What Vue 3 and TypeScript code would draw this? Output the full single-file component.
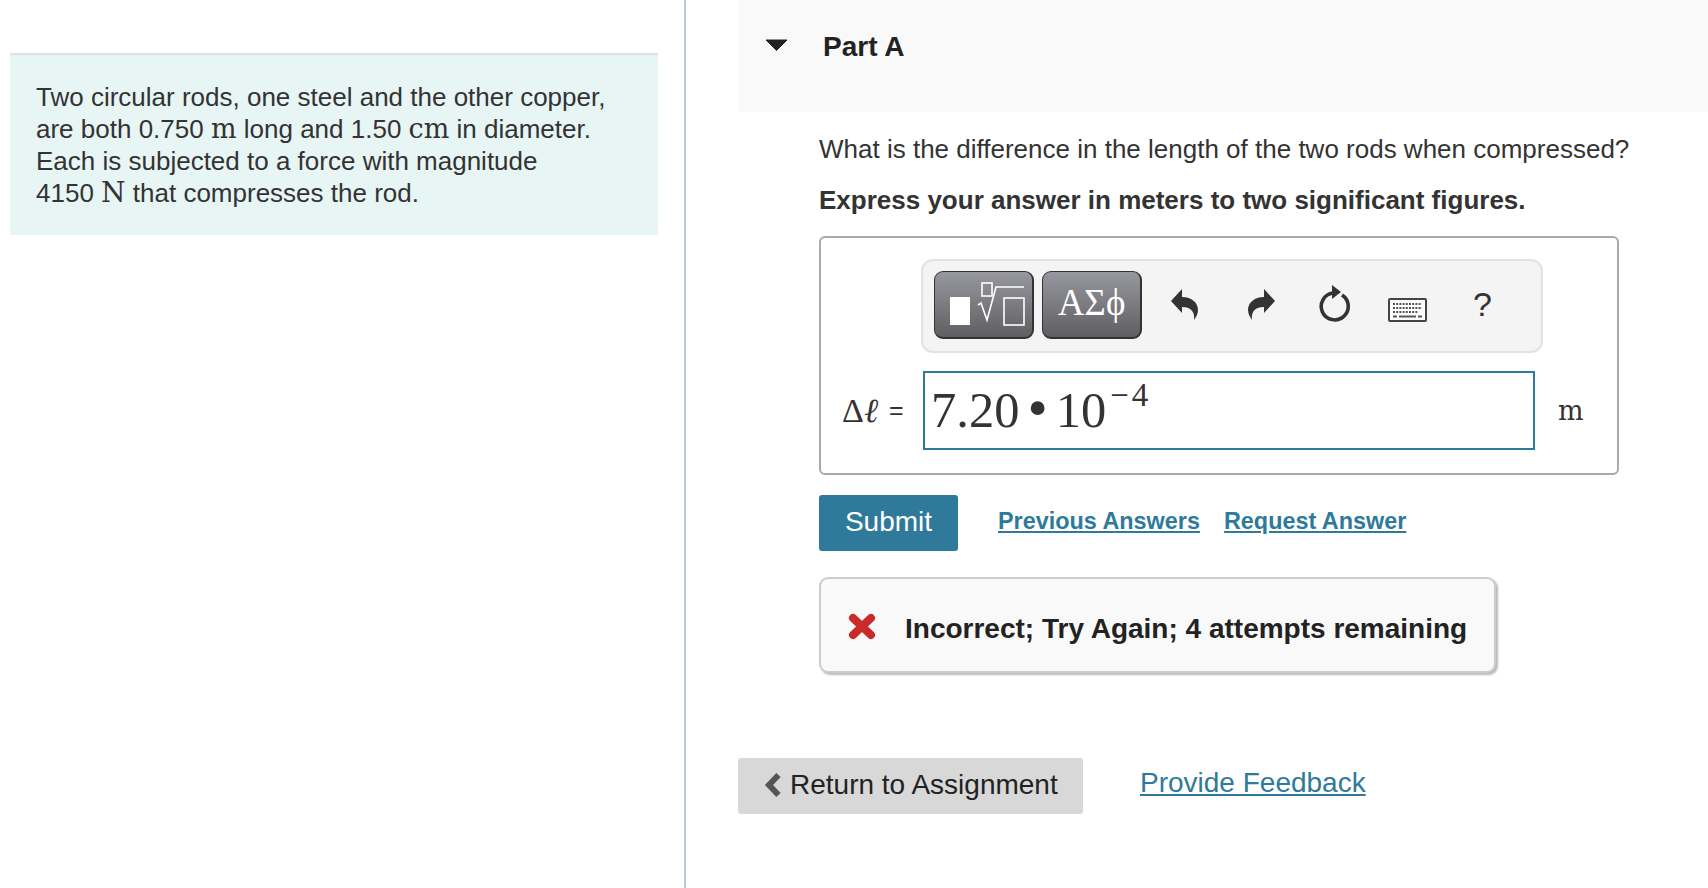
<template>
  <div class="page">
    <!-- left column -->
    <div class="left">
      <div class="intro">
        Two circular rods, one steel and the other copper,<br>
        are both 0.750 <span class="unit">m</span> long and 1.50 <span class="unit">cm</span> in diameter.<br>
        Each is subjected to a force with magnitude<br>
        4150 <span class="unit big">N</span> that compresses the rod.
      </div>
    </div>

    <!-- right column -->
    <div class="right">
      <div class="part-head">
        <svg class="caret" width="23" height="12" viewBox="0 0 23 12"><path d="M1 1H22L11.5 11.5Z" fill="#222" stroke="#222" stroke-linejoin="round" /></svg>
        <h2>Part A</h2>
      </div>

      <div class="part-body">
        <p class="question">What is the difference in the length of the two rods when compressed?</p>
        <p class="instruction">Express your answer in meters to two significant figures.</p>

        <div class="answer-box">
          <div class="toolbar">
            <button class="tool-btn templates">
              <svg width="97" height="65" viewBox="0 0 97 65">
                <rect x="15" y="25" width="20" height="28" fill="#fff" />
                <g fill="none" stroke="#fff" stroke-width="1.6">
                  <rect x="47" y="11" width="10" height="13" />
                  <path d="M43 33L46 31L52 48L61 15H89" />
                  <rect x="69" y="26" width="20" height="27" />
                </g>
              </svg>
            </button>
            <button class="tool-btn greek">ΑΣϕ</button>
            <svg class="icon undo" width="30" height="34" viewBox="0 0 30 34">
              <path d="M2 15L13 3V11C23 11 29 17 29 24C29 28 27 31 25 34C26 27 23 21 13 21V27Z" fill="#333" />
            </svg>
            <svg class="icon redo" width="30" height="34" viewBox="0 0 30 34">
              <path d="M28 15L17 3V11C7 11 1 17 1 24C1 28 3 31 5 34C4 27 7 21 17 21V27Z" fill="#333" />
            </svg>
            <svg class="icon reset" width="34" height="38" viewBox="0 0 34 38">
              <path d="M15 8A13.5 13.5 0 1 0 24 10" fill="none" stroke="#333" stroke-width="3.6" />
              <path d="M14 0L23 7L14 14Z" fill="#333" />
            </svg>
            <svg class="icon keyboard" width="39" height="24" viewBox="0 0 39 24">
              <rect x="1" y="1" width="37" height="22" rx="1" fill="#fff" stroke="#444" stroke-width="2" />
              <path d="M5 6H34M5 10H34M5 14H30" stroke="#555" stroke-width="2" stroke-dasharray="2 1.2" />
              <path d="M5 18.5H9M11 18.5H28M30 18.5H34" stroke="#555" stroke-width="2" />
            </svg>
            <span class="help">?</span>
          </div>

          <div class="answer-row">
            <span class="label"><span class="delta">Δ</span><i>ℓ</i><span class="eq">=</span></span>
            <div class="input">7.20<span class="dot">•</span>10<sup>−<span class="exp">4</span></sup></div>
            <span class="answer-unit">m</span>
          </div>
        </div>

        <div class="actions">
          <button class="submit">Submit</button>
          <a class="action-link">Previous Answers</a>
          <a class="action-link">Request Answer</a>
        </div>

        <div class="feedback">
          <svg width="28" height="27" viewBox="0 0 28 27">
            <path d="M5 5L23 22M23 5L5 22" fill="none" stroke="#ca2a2a" stroke-width="8" stroke-linecap="round" />
          </svg>
          <span>Incorrect; Try Again; 4 attempts remaining</span>
        </div>
      </div>

      <div class="footer">
        <button class="return">
          <svg width="18" height="26" viewBox="0 0 18 26"><path d="M14.5 3L5 13L14.5 23" fill="none" stroke="#555" stroke-width="6" /></svg>
          Return to Assignment
        </button>
        <a class="provide">Provide Feedback</a>
      </div>
    </div>
  </div>
</template>

<script setup lang="ts">
</script>

<style>
html, body {
  background: #fff;
}
</style>

<style scoped>
.page {
  display: flex;
  height: 888px;
  overflow: hidden;
  font-family: "Liberation Sans", Arial, sans-serif;
  color: #333;
}

.left {
  width: 686px;
  height: 888px;
  box-sizing: border-box;
  flex-shrink: 0;
  padding: 53px 26px 0 10px;
  border-right: 2px solid #bccbdc;
}

.intro {
  background: #e7f5f5;
  border-top: 2px solid #dde2e2;
  padding: 26px 26px 25px;
  height: 182px;
  box-sizing: border-box;
  font-size: 26px;
  line-height: 32px;
}

.unit {
  font-family: "DejaVu Serif", serif;
  font-size: 27px;
  line-height: 0;
}

.unit.big {
  font-size: 28px;
}

.right {
  margin-left: 52px;
  flex: 1;
  min-width: 0;
}

.part-head {
  display: flex;
  align-items: flex-start;
  height: 112px;
  box-sizing: border-box;
  padding: 38px 0 0 27px;
  background: #f9f9f9;
}

.caret {
  margin-top: 1px;
}

.part-head h2 {
  margin: -7px 0 0 35px;
  font-size: 28px;
  line-height: 32px;
  color: #222;
}

.part-body {
  padding-left: 81px;
}

.question {
  margin: 21px 0 0;
  font-size: 26px;
  line-height: 32px;
}

.instruction {
  margin: 19px 0 0;
  font-size: 26px;
  line-height: 32px;
  font-weight: bold;
}

.answer-box {
  width: 800px;
  height: 239px;
  box-sizing: border-box;
  margin-top: 20px;
  padding: 21px 30px 0 22px;
  border: 2px solid #aaa;
  border-radius: 6px;
}

.toolbar {
  display: flex;
  align-items: center;
  width: 622px;
  height: 94px;
  box-sizing: border-box;
  margin-left: 78px;
  padding-left: 11px;
  background: #f4f4f4;
  border: 2px solid #e2e2e2;
  border-radius: 12px;
}

.tool-btn {
  width: 100px;
  height: 68px;
  box-sizing: border-box;
  margin-bottom: 2px;
  padding: 0;
  background: linear-gradient(#97979f, #5f5f61);
  border: 1px solid #333;
  border-bottom-width: 2px;
  border-right-width: 2px;
  border-radius: 9px;
  color: #fff;
}

.tool-btn svg {
  display: block;
}

.greek {
  margin-left: 8px;
  padding-bottom: 4px;
  font-family: "Liberation Serif", serif;
  font-size: 37px;
}

.icon {
  flex-shrink: 0;
}

.undo {
  margin-left: 27px;
  margin-bottom: 6px;
}

.redo {
  margin-left: 48px;
  margin-bottom: 6px;
}

.reset {
  margin-left: 41px;
  margin-bottom: 4px;
}

.keyboard {
  margin-left: 36px;
  margin-top: 7px;
}

.help {
  margin-left: 46px;
  margin-bottom: 4px;
  font-size: 34px;
}

.answer-row {
  display: flex;
  align-items: center;
  margin-top: 18px;
}

.label {
  display: flex;
  align-items: center;
  width: 80px;
  flex-shrink: 0;
  margin-left: -1px;
  margin-right: 1px;
  white-space: nowrap;
}

.delta, .label i {
  font-family: "Liberation Serif", serif;
  font-size: 34px;
}

.eq {
  margin-left: 11px;
  font-size: 25px;
}

.input {
  width: 612px;
  height: 79px;
  box-sizing: border-box;
  border: 2px solid #2f7a9b;
  padding-left: 6px;
  font-family: "Liberation Serif", serif;
  font-size: 50.5px;
  line-height: 75px;
  white-space: nowrap;
}

.dot {
  margin: 0 8px;
  font-size: 58px;
  line-height: 0;
}

.input sup {
  font-size: 33px;
  line-height: 0;
  vertical-align: 21px;
  margin-left: 4px;
}

.exp {
  margin-left: 3px;
}

.answer-unit {
  margin-left: 23px;
  font-family: "DejaVu Serif", serif;
  font-size: 27px;
}

.actions {
  display: flex;
  align-items: flex-start;
  margin-top: 20px;
}

.submit {
  width: 139px;
  height: 56px;
  padding: 0 0 2px;
  background: #2f7a9b;
  border: none;
  border-radius: 3px;
  color: #fff;
  font-family: inherit;
  font-size: 28px;
}

.action-link {
  margin: 10px 0 0 24px;
  color: #2f7a9b;
  font-size: 23.4px;
  line-height: 32px;
  font-weight: bold;
  text-decoration: underline;
}

.action-link:first-of-type {
  margin-left: 40px;
}

.feedback {
  display: flex;
  align-items: center;
  width: 677px;
  height: 96px;
  box-sizing: border-box;
  margin-top: 26px;
  padding-left: 27px;
  background: #f9f9f9;
  border: 2px solid #ccc;
  border-radius: 9px;
  box-shadow: 2px 2px 2px #bbb;
  color: #222;
  font-size: 28px;
  font-weight: bold;
}

.feedback svg {
  margin-top: 2px;
}

.feedback span {
  margin-left: 29px;
  padding-top: 7px;
  white-space: nowrap;
}

.footer {
  display: flex;
  align-items: flex-start;
  margin-top: 85px;
}

.return {
  display: flex;
  align-items: center;
  gap: 8px;
  width: 345px;
  height: 56px;
  padding: 0 0 2px 26px;
  background: #d8d8d8;
  border: none;
  border-radius: 3px;
  color: #222;
  font-family: inherit;
  font-size: 28px;
  white-space: nowrap;
}

.provide {
  margin-left: 57px;
  margin-top: 1px;
  color: #2f7a9b;
  font-size: 28px;
  line-height: 48px;
  text-decoration: underline;
}
</style>
